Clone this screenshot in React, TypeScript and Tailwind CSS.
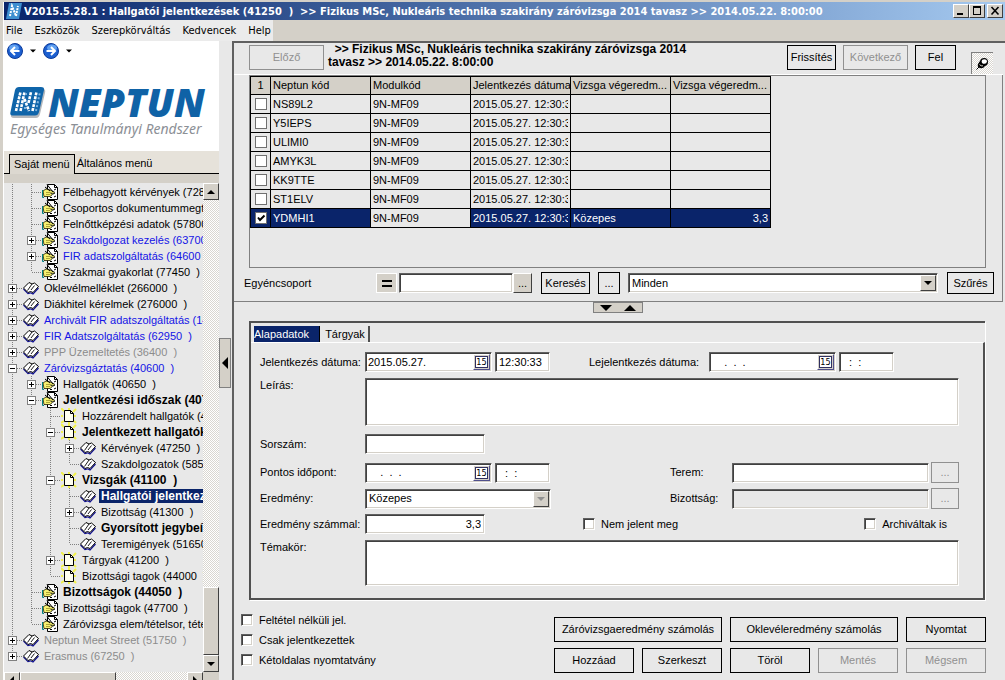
import { useState, type InputHTMLAttributes, type ReactNode } from 'react'
import clsx from 'clsx'

type IconKind = 'book' | 'hand' | 'doc'

interface TreeItem {
  level: number
  label: string
  icon: IconKind
  exp?: '+' | '-'
  tone?: 'blue' | 'gray'
  bold?: boolean
  selected?: boolean
}

const TREE: TreeItem[] = [
  { level: 1, label: 'Félbehagyott kérvények (72850  )', icon: 'hand' },
  { level: 1, label: 'Csoportos dokumentummegtekintés', icon: 'hand' },
  { level: 1, label: 'Felnőttképzési adatok (57800  )', icon: 'hand' },
  { level: 1, label: 'Szakdolgozat kezelés (63700  )', icon: 'hand', exp: '+', tone: 'blue' },
  { level: 1, label: 'FIR adatszolgáltatás (64600  )', icon: 'hand', exp: '+', tone: 'blue' },
  { level: 1, label: 'Szakmai gyakorlat (77450  )', icon: 'hand' },
  { level: 0, label: 'Oklevélmelléklet (266000  )', icon: 'book', exp: '+' },
  { level: 0, label: 'Diákhitel kérelmek (276000  )', icon: 'book', exp: '+' },
  { level: 0, label: 'Archivált FIR adatszolgáltatás (144000  )', icon: 'book', exp: '+', tone: 'blue' },
  { level: 0, label: 'FIR Adatszolgáltatás (62950  )', icon: 'book', exp: '+', tone: 'blue' },
  { level: 0, label: 'PPP Üzemeltetés (36400  )', icon: 'book', exp: '+', tone: 'gray' },
  { level: 0, label: 'Záróvizsgáztatás (40600  )', icon: 'book', exp: '-', tone: 'blue' },
  { level: 1, label: 'Hallgatók (40650  )', icon: 'hand', exp: '+' },
  { level: 1, label: 'Jelentkezési időszak (40700  )', icon: 'hand', exp: '-', bold: true },
  { level: 2, label: 'Hozzárendelt hallgatók (40750  )', icon: 'doc' },
  { level: 2, label: 'Jelentkezett hallgatók (40800  )', icon: 'doc', exp: '-', bold: true },
  { level: 3, label: 'Kérvények (47250  )', icon: 'book', exp: '+' },
  { level: 3, label: 'Szakdolgozatok (58500  )', icon: 'book' },
  { level: 2, label: 'Vizsgák (41100  )', icon: 'doc', exp: '-', bold: true },
  { level: 3, label: 'Hallgatói jelentkezések (41250  )', icon: 'book', bold: true, selected: true },
  { level: 3, label: 'Bizottság (41300  )', icon: 'book', exp: '+' },
  { level: 3, label: 'Gyorsított jegybeírás (41350  )', icon: 'book', bold: true },
  { level: 3, label: 'Teremigények (51650  )', icon: 'book' },
  { level: 2, label: 'Tárgyak (41200  )', icon: 'doc', exp: '+' },
  { level: 2, label: 'Bizottsági tagok (44000  )', icon: 'doc' },
  { level: 1, label: 'Bizottságok (44050  )', icon: 'hand', bold: true },
  { level: 1, label: 'Bizottsági tagok (47700  )', icon: 'hand' },
  { level: 1, label: 'Záróvizsga elem/tételsor, tételek', icon: 'hand' },
  { level: 0, label: 'Neptun Meet Street (51750  )', icon: 'book', exp: '+', tone: 'gray' },
  { level: 0, label: 'Erasmus (67250  )', icon: 'book', exp: '+', tone: 'gray' },
]

const CODES = ['NS89L2', 'Y5IEPS', 'ULIMI0', 'AMYK3L', 'KK9TTE', 'ST1ELV', 'YDMHI1']
const HEADERS = ['1', 'Neptun kód', 'Modulkód', 'Jelentkezés dátuma', 'Vizsga végeredm...', 'Vizsga végeredm...']

const raised = 'border border-t-white border-l-white border-r-[#404040] border-b-[#404040] bg-[#d4d0c8]'
const sunken = 'border border-t-[#606060] border-l-[#606060] border-r-white border-b-white shadow-[inset_1px_1px_0_#404040,inset_-1px_-1px_0_#d4d0c8]'
const dither = 'bg-[conic-gradient(#ffffff_25%,#d9d6d0_0_50%,#ffffff_0_75%,#d9d6d0_0)] bg-[length:2px_2px]'

// does the branch line at this depth go on below row i?
function continues(i: number, depth: number) {
  for (let k = i + 1; k < TREE.length; k++) {
    if (TREE[k].level < depth) return false
    if (TREE[k].level === depth) return true
  }
  return false
}

function Guide({ up, down, across, exp }: { up: boolean; down: boolean; across?: boolean; exp?: '+' | '-' }) {
  return (
    <svg width="19" height="16" viewBox="0 0 19 16" className="shrink-0" shapeRendering="crispEdges">
      <g stroke="#808080" strokeDasharray="1 1">
        {up && <path d="M8.5 0V8" />}
        {down && <path d="M8.5 8V16" />}
        {across && <path d="M9 8.5H19" />}
      </g>
      {exp && (
        <>
          <rect x="4.5" y="4.5" width="8" height="8" fill="#fff" stroke="#808080" />
          <path d={exp === '+' ? 'M6 8.5H11M8.5 6V11' : 'M6 8.5H11'} stroke="#000" />
        </>
      )}
    </svg>
  )
}

function TreeIcon({ kind }: { kind: IconKind }) {
  return (
    <svg width="16" height="16" viewBox="0 0 16 16" className="shrink-0">
      {kind === 'book' && (
        <>
          <path d="M0.5 9L5 13.5L7.5 12.8L10 14L15.5 8" fill="none" stroke="#101090" strokeWidth="1.2" />
          <path d="M0.5 8L6 2.5L9 4L11.5 3L15.500 6.500L10 12.500L7.500 11.500L5 12.500Z" fill="#fff" stroke="#000" />
          <path d="M9 4L4.500 10.500M11.500 5.500L8 10" stroke="#000" strokeWidth="0.9" />
        </>
      )}
      {kind === 'hand' && (
        <>
          <path d="M5.5 0.5H12.5L15.5 3.5V15.5H5.5Z" fill="#fff" stroke="#000" />
          <path d="M12.5 0.5V3.5H15.5" fill="none" stroke="#000" />
          <path d="M12 6L14 5M11 10L13 9M8 13.5H10M12 13L14 12" stroke="#000" />
          <path d="M1 7L4 5L7 5.500L12.500 8L11.500 9.500L8.500 9L10.500 10.500L8 12.500L2 12.500Z" fill="#f6f070" stroke="#1a1a00" strokeWidth="0.8" />
          <path d="M4 8.500H8M4 10.500H8" stroke="#8a8420" strokeWidth="0.7" />
          <path d="M5 0.500L11 8M3 3L8 7" stroke="#000" />
          <path d="M0.5 6V13.5H2" stroke="#008080" fill="none" />
        </>
      )}
      {kind === 'doc' && (
        <>
          <path d="M0 0L3 3M8 0V2M15 1L12 4M0 8H2M15 8H13M0 15L3 13M15 15L13 13M8 16V14" stroke="#f2f24a" strokeWidth="2" />
          <path d="M3.5 2.5H9.5L12.5 5.5V13.5H3.5Z" fill="#fffff0" stroke="#000" />
          <path d="M9.5 2.5V5.5H12.5" fill="none" stroke="#000" />
        </>
      )}
    </svg>
  )
}

function Arrow({ dir, className }: { dir: 'up' | 'down' | 'left' | 'right'; className?: string }) {
  const d = {
    up: 'M0 6L4 2L8 6Z',
    down: 'M0 2L4 6L8 2Z',
    left: 'M6 0L2 4L6 8Z',
    right: 'M2 0L6 4L2 8Z',
  }[dir]
  return <svg width="8" height="8" viewBox="0 0 8 8" className={clsx('shrink-0', className)} fill="currentColor"><path d={d} /></svg>
}

function Btn({ children, className, disabled, label }: { children: ReactNode; className?: string; disabled?: boolean; label?: string }) {
  return (
    <button
      type="button"
      disabled={disabled}
      aria-label={label}
      className={clsx(
        'flex shrink-0 items-center justify-center border whitespace-nowrap',
        disabled ? 'border-[#909090] text-[#909090]' : 'border-black text-black',
        className,
      )}
    >
      {children}
    </button>
  )
}

function Check({ flat, className, ...rest }: InputHTMLAttributes<HTMLInputElement> & { flat?: boolean }) {
  return (
    <span className={clsx('grid h-3 w-3 shrink-0', className)}>
      <input
        type="checkbox"
        className={clsx('peer col-start-1 row-start-1 h-3 w-3 appearance-none bg-white', flat ? 'border border-[#707070]' : sunken)}
        {...rest}
      />
      <svg viewBox="0 0 12 12" className="pointer-events-none col-start-1 row-start-1 hidden h-3 w-3 peer-checked:block">
        <path d="M3 5.5L5 8L9.5 3.5" fill="none" stroke="#000" strokeWidth="2" />
      </svg>
    </span>
  )
}

function TextBox({ className, ...rest }: InputHTMLAttributes<HTMLInputElement>) {
  return <input type="text" className={clsx('h-5 min-w-0 bg-white px-[3px] outline-none', sunken, className)} {...rest} />
}

function DateTime({ id, date, time, name }: { id: string; date: string; time: string; name: string }) {
  return (
    <div className="flex gap-[3px]">
      <div className={clsx('flex h-5 w-[127px] bg-white p-px pl-0.5', sunken)}>
        <input id={id} type="text" defaultValue={date} className="min-w-0 flex-1 bg-transparent outline-none" />
        <button type="button" aria-label={`${name} naptár`} className="flex w-[17px] items-center justify-center border border-t-white border-l-white border-r-[#50508c] border-b-[#50508c] bg-[#d4d0c8]">
          <span className="border border-[#303060] bg-white font-['DejaVu_Sans_Condensed',sans-serif] text-[9px] leading-[10px]">15</span>
        </button>
      </div>
      <TextBox aria-label={`${name} idő`} defaultValue={time} className="w-[55px]" />
    </div>
  )
}

function Combo({ id, label, options, disabled, className }: { id: string; label?: string; options: string[]; disabled?: boolean; className?: string }) {
  return (
    <div className={clsx('flex h-5 bg-white p-px', sunken, className)}>
      <div className="relative flex flex-1">
        <select id={id} aria-label={label} className="w-full appearance-none bg-transparent pl-0.5 outline-none">
          {options.map((o) => <option key={o}>{o}</option>)}
        </select>
        <span className={clsx('pointer-events-none absolute inset-y-0 right-0 flex w-4 items-center justify-center', raised)}>
          <Arrow dir="down" className={disabled ? 'text-[#909090]' : undefined} />
        </span>
      </div>
    </div>
  )
}

function TitleBar() {
  return (
    <header className="flex h-[18px] shrink-0 items-center gap-0.5 bg-linear-to-r from-[#0a246a] to-[#a6caf0] px-0.5">
      <svg width="16" height="16" viewBox="0 0 16 16">
        <path d="M3 0H16L13 16H0Z" fill="#3d8fd0" />
        <path d="M4 13L6 3L10 13L12 3" fill="none" stroke="#fff" strokeWidth="2" strokeDasharray="2 1" />
      </svg>
      <h1 className="min-w-0 flex-1 overflow-hidden font-['DejaVu_Sans_Condensed',sans-serif] text-[11px] font-bold whitespace-pre text-white">
        {'V2015.5.28.1 : Hallgatói jelentkezések (41250  )  >> Fizikus MSc, Nukleáris technika szakirány záróvizsga 2014 tavasz >> 2014.05.22. 8:00:00'}
      </h1>
      <div className="flex">
        <button type="button" aria-label="Kis méret" className={clsx('h-3.5 w-4', raised)}>
          <svg viewBox="0 0 14 12"><path d="M3 9H9" stroke="#000" strokeWidth="2" /></svg>
        </button>
        <button type="button" aria-label="Teljes méret" className={clsx('h-3.5 w-4', raised)}>
          <svg viewBox="0 0 14 12"><path d="M3 2.5H11M3.5 2V10M10.5 2V10M3 9.5H11M3 1.5H11" stroke="#000" /></svg>
        </button>
        <button type="button" aria-label="Bezárás" className={clsx('ml-0.5 h-3.5 w-4', raised)}>
          <svg viewBox="0 0 14 12"><path d="M3.5 2L10.5 9.5M10.5 2L3.5 9.5" stroke="#000" strokeWidth="1.6" /></svg>
        </button>
      </div>
    </header>
  )
}

function NavButton({ flip, label }: { flip?: boolean; label: string }) {
  return (
    <button type="button" aria-label={label} className="flex items-center">
      <svg width="16" height="16" viewBox="0 0 16 16" className={clsx(flip && '-scale-x-100')}>
        <circle cx="8" cy="8" r="7.5" fill="#1c5fd0" stroke="#0b3a9a" />
        <ellipse cx="7" cy="5" rx="5" ry="3.5" fill="#5fa0f0" />
        <path d="M12.5 8H4.5M8 4L4 8L8 12" fill="none" stroke="#fff" strokeWidth="2" />
      </svg>
    </button>
  )
}

function Logo() {
  return (
    <div className="mt-[26px] pl-1.5">
      <div className="flex items-center gap-0.5">
        <svg width="36" height="33" viewBox="0 0 36 33" className="shrink-0">
          <path d="M8 3H33Q36 3 35 7L30 28Q29 32 26 32H4Q0 32 1 28Z" fill="#b4b8bc" />
          <path d="M9 1H31Q34.500 1 34 4L29 26Q28 29.500 25 29.500H3Q-0.500 29.500 0.500 26L5 4Q6 1 9 1Z" fill="#0f65aa" />
          <g fill="none" stroke="#fff" strokeWidth="2.600" strokeDasharray="3 1">
            <path d="M6 25L10.500 6M10.500 25L14.500 6M14.500 13L19 25" />
            <path d="M18.500 17L21 6M22.500 25L26.500 6" />
          </g>
          <path d="M15 8H19M14 22H17M26 25L30 6" fill="none" stroke="#7fb2dc" strokeWidth="2" strokeDasharray="2 2" />
        </svg>
        <span className="font-['Open_Sans',sans-serif] text-[39px] leading-[34px] font-extrabold text-[#0f62a6] italic">NEPTUN</span>
      </div>
      <p className="font-['Noto_Sans',sans-serif] text-sm leading-5 whitespace-nowrap text-[#8c9096] italic">Egységes Tanulmányi Rendszer</p>
    </div>
  )
}

function Sidebar() {
  return (
    <aside className="flex w-[215px] shrink-0 flex-col">
      <div className="h-[110px] shrink-0 overflow-hidden bg-white">
        <div className="flex items-center gap-[7px] pt-0.5 pl-[3px]">
          <NavButton label="Vissza" />
          <Arrow dir="down" className="w-[6px]" />
          <NavButton label="Előre" flip />
          <Arrow dir="down" className="w-[6px]" />
        </div>
        <Logo />
      </div>
      <div className="flex shrink-0 items-end bg-[#e6e2da] pt-[3px]" role="tablist">
        <span className="w-[5px] border-b border-black" />
        <button type="button" role="tab" aria-selected="true" className="h-5 border-x border-t border-black bg-[#dcd8d0] px-1">Saját menü</button>
        <button type="button" role="tab" aria-selected="false" className="h-5 flex-1 border-b border-black pl-0.5 text-left">Általános menü</button>
      </div>
      <div className="h-[9px] shrink-0 bg-[#d4d0c8]" />
      <div className="flex min-h-0 flex-1">
        <ul className="min-w-0 flex-1 overflow-hidden bg-[#e8e8e8] pt-px">
          {TREE.map((item, i) => (
            <li key={item.label} className="flex h-4 items-center">
              {Array.from({ length: item.level }, (_, d) => (
                <Guide key={d} up={continues(i, d)} down={continues(i, d)} />
              ))}
              <Guide up down={continues(i, item.level)} across exp={item.exp} />
              <TreeIcon kind={item.icon} />
              <a
                href="#"
                className={clsx(
                  'ml-[3px] px-0.5 whitespace-pre',
                  item.bold && 'text-[12px] leading-[14px] font-bold',
                  item.selected ? 'bg-[#0a246a] text-white'
                  : item.tone === 'blue' ? 'text-[#1414e6]'
                  : item.tone === 'gray' ? 'text-[#8c8c8c]'
                  : 'text-black',
                )}
              >
                {item.label}
              </a>
            </li>
          ))}
        </ul>
        <div className={clsx('flex w-4 shrink-0 flex-col', dither)}>
          <button type="button" aria-label="Fel görget" className={clsx('flex h-[17px] items-center justify-center', raised)}><Arrow dir="up" /></button>
          <div className="flex-1" />
          <div className={clsx('h-[68px]', raised)} />
          <button type="button" aria-label="Le görget" className={clsx('flex h-[17px] items-center justify-center', raised)}><Arrow dir="down" /></button>
        </div>
      </div>
      {/* horizontal scroll bar, runs under the window edge */}
      <div className="flex h-2 shrink-0 overflow-hidden bg-[#d4d0c8]">
        <div className={clsx('flex min-w-0 flex-1', dither)}>
          <button type="button" aria-label="Balra görget" className={clsx('flex h-4 w-4 items-center justify-center', raised)}><Arrow dir="left" /></button>
          <div className={clsx('h-4 w-24', raised)} />
          <button type="button" aria-label="Jobbra görget" className={clsx('ml-auto flex h-4 w-4 items-center justify-center', raised)}><Arrow dir="right" /></button>
        </div>
        <div className="w-4" />
      </div>
    </aside>
  )
}

function StudentTable() {
  return (
    <table className="w-[521px] table-fixed border-collapse">
      <colgroup>
        <col className="w-5" />
        {HEADERS.slice(1).map((_, i) => <col key={i} className="w-[100px]" />)}
      </colgroup>
      <thead>
        <tr className="h-[18px] bg-[#d4d0c8]">
          {HEADERS.map((h, i) => (
            <th key={i} className={clsx('border border-black p-0 font-normal whitespace-nowrap', i === 0 ? 'text-center' : 'pl-0.5 text-left')}>{h}</th>
          ))}
        </tr>
      </thead>
      <tbody>
        {CODES.map((code) => {
          const active = code === 'YDMHI1'
          return (
            <tr key={code} className={clsx('h-[19px]', active && 'bg-[#0a246a] text-white')}>
              <td className="border border-black p-0"><Check flat defaultChecked={active} aria-label={code} className="mx-auto" /></td>
              <td className="border border-black px-0.5 py-0">{code}</td>
              <td className="border border-black bg-[#e8e8e8] px-0.5 py-0 text-black">9N-MF09</td>
              <td className="border border-black px-0.5 py-0 whitespace-nowrap">
                <div className="overflow-hidden">2015.05.27. 12:30:33</div>
              </td>
              <td className="border border-black px-0.5 py-0">{active && 'Közepes'}</td>
              <td className="border border-black px-0.5 py-0 text-right">{active && '3,3'}</td>
            </tr>
          )
        })}
      </tbody>
    </table>
  )
}

function ListPanel() {
  return (
    <section className="border-r border-b border-[#808080]">
      <div className="mr-4 ml-[15px] h-[193px] border border-[#808080]">
        <StudentTable />
      </div>
      <div className="flex items-center pt-1 pr-2 pb-[7px] pl-2.5">
        <label htmlFor="group" className="w-[132px]">Egyéncsoport</label>
        <button type="button" aria-label="Egyenlő" className="mr-0.5 flex h-5 w-[21px] items-center justify-center border border-white bg-[#d4d0c8]">
          <svg width="10" height="7" viewBox="0 0 10 7"><path d="M0 1H10M0 6H10" stroke="#000" strokeWidth="2" /></svg>
        </button>
        <TextBox id="group" className="w-[114px]" />
        <button type="button" aria-label="Csoport választás" className={clsx('h-5 w-[19px]', raised)}>...</button>
        <Btn className="ml-[9px] h-[22px] w-[49px]">Keresés</Btn>
        <Btn className="ml-2 h-[22px] w-[22px]" label="További keresés">...</Btn>
        <Combo id="filter" label="Szűrő" options={['Minden']} className="mr-[9px] ml-2 flex-1" />
        <Btn className="h-[22px] w-[47px]">Szűrés</Btn>
      </div>
    </section>
  )
}

function FieldRow({ id, label, children, className, top }: { id: string; label: string; children: ReactNode; className?: string; top?: boolean }) {
  return (
    <div className={clsx('flex', top ? 'items-start' : 'items-center', className)}>
      <label htmlFor={id} className={clsx('w-[105px] shrink-0', top && 'pt-px')}>{label}</label>
      {children}
    </div>
  )
}

function FormPanel() {
  const [tab, setTab] = useState('Alapadatok')
  return (
    <section className="mr-5 ml-[15px] border-t-2 border-l-2 border-[#505050] shadow-[1px_1px_0_#fff]">
      <div className="flex h-[19px] items-end gap-0.5 pt-[3px] pl-[3px]" role="tablist">
        {['Alapadatok', 'Tárgyak'].map((t) => (
          <button
            key={t}
            type="button"
            role="tab"
            aria-selected={tab === t}
            onClick={() => setTab(t)}
            className={clsx('h-4', tab === t ? 'w-[66px] border-r border-black bg-[#0a246a] text-left text-white' : 'w-12 border-r-2 border-[#505050]')}
          >
            {t}
          </button>
        ))}
      </div>
      <div className="border-t border-r-2 border-b-2 border-t-white border-r-[#505050] border-b-[#505050] pt-[9px] pr-6 pb-3 pl-[9px]">
        <FieldRow id="signup" label="Jelentkezés dátuma:">
          <DateTime id="signup" name="Jelentkezés" date="2015.05.27." time="12:30:33" />
          <label htmlFor="signoff" className="ml-[39px] w-[120px] whitespace-nowrap">Lejelentkezés dátuma:</label>
          <DateTime id="signoff" name="Lejelentkezés" date="    .  .  ." time="  :  :" />
        </FieldRow>
        <FieldRow id="desc" label="Leírás:" top className="mt-1.5">
          <textarea id="desc" className={clsx('h-12 flex-1 resize-none bg-white outline-none', sunken)} />
        </FieldRow>
        <FieldRow id="serial" label="Sorszám:" className="mt-2">
          <TextBox id="serial" className="w-[120px]" />
        </FieldRow>
        <div className="mt-2 flex items-center justify-between">
          <FieldRow id="when" label="Pontos időpont:">
            <DateTime id="when" name="Pontos időpont" date="    .  .  ." time="  :  :" />
          </FieldRow>
          <div className="flex items-center">
            <label htmlFor="room" className="w-[62px]">Terem:</label>
            <TextBox id="room" className="w-[197px]" />
            <Btn disabled label="Terem választás" className="ml-0.5 h-[21px] w-7">...</Btn>
          </div>
        </div>
        <div className="mt-[5px] flex items-center justify-between">
          <FieldRow id="result" label="Eredmény:">
            <Combo id="result" options={['Közepes']} disabled className="w-[186px]" />
          </FieldRow>
          <div className="flex items-center">
            <label htmlFor="board" className="w-[62px]">Bizottság:</label>
            <TextBox id="board" readOnly className="w-[197px] bg-[#e8e8e8]!" />
            <Btn disabled label="Bizottság választás" className="ml-0.5 h-[21px] w-7">...</Btn>
          </div>
        </div>
        <div className="mt-[5px] flex items-center">
          <FieldRow id="score" label="Eredmény számmal:">
            <TextBox id="score" defaultValue="3,3" className="w-[120px] text-right" />
          </FieldRow>
          <label className="ml-[98px] flex items-center gap-1.5"><Check />Nem jelent meg</label>
          <label className="mr-3 ml-auto flex items-center gap-1.5"><Check />Archiváltak is</label>
        </div>
        <FieldRow id="topic" label="Témakör:" top className="mt-1.5">
          <textarea id="topic" className={clsx('h-[46px] flex-1 resize-none bg-white outline-none', sunken)} />
        </FieldRow>
      </div>
    </section>
  )
}

function Footer() {
  return (
    <footer className="flex items-start justify-between pt-3.5 pr-[19px] pl-[7px]">
      <div className="flex flex-col">
        {['Feltétel nélküli jel.', 'Csak jelentkezettek', 'Kétoldalas nyomtatvány'].map((t) => (
          <label key={t} className="flex h-5 items-start gap-1.5"><Check />{t}</label>
        ))}
      </div>
      <div className="grid grid-cols-5 gap-x-2 gap-y-1.5 pt-[3px]">
        <Btn className="col-span-2 h-[25px]">Záróvizsgaeredmény számolás</Btn>
        <Btn className="col-span-2 h-[25px]">Oklevéleredmény számolás</Btn>
        <Btn className="h-[25px] w-20">Nyomtat</Btn>
        <Btn className="h-[25px] w-20">Hozzáad</Btn>
        <Btn className="h-[25px] w-20">Szerkeszt</Btn>
        <Btn className="h-[25px] w-20">Töröl</Btn>
        <Btn disabled className="h-[25px] w-20">Mentés</Btn>
        <Btn disabled className="h-[25px] w-20">Mégsem</Btn>
      </div>
    </footer>
  )
}

export default function App() {
  return (
    <div className="flex h-screen flex-col overflow-hidden bg-[#d4d0c8] pt-0.5 font-['Liberation_Sans',Arial,sans-serif] text-[11px] leading-[13px] text-black">
      <div className="ml-[3px] flex min-h-0 flex-1 flex-col border-l border-white">
        <TitleBar />
        <nav className="flex h-[21px] w-[269px] shrink-0 items-center gap-3 bg-[#ebebeb] pl-0.5 font-['DejaVu_Sans_Condensed',sans-serif]">
          {['File', 'Eszközök', 'Szerepkörváltás', 'Kedvencek', 'Help'].map((m) => <a key={m} href="#">{m}</a>)}
        </nav>
        <div className="flex min-h-0 flex-1">
          <Sidebar />
          <div className="flex w-[13px] shrink-0 items-center bg-[#e8e8e8] pt-1">
            <button type="button" aria-label="Menü elrejtése" className="flex h-[50px] w-3 items-center justify-center border border-[#808080] bg-[#d4d0c8]">
              <Arrow dir="left" className="h-3 w-3" />
            </button>
          </div>
          <main className="flex min-w-0 flex-1 flex-col border-t-2 border-l-2 border-[#606060] bg-[#e8e8e8]">
            <div className="mr-0.5 flex h-8 shrink-0 items-start border-b border-white pr-2.5 pl-[15px]">
              <Btn disabled className="mt-0.5 h-[25px] w-[75px]">Előző</Btn>
              <h2 className="ml-1 flex-1 text-[12px] font-bold whitespace-pre">{'  >> Fizikus MSc, Nukleáris technika szakirány záróvizsga 2014\ntavasz >> 2014.05.22. 8:00:00'}</h2>
              <div className="mt-0.5 flex gap-[7px]">
                <Btn className="h-[25px] w-[49px]">Frissítés</Btn>
                <Btn disabled className="h-[25px] w-[65px]">Következő</Btn>
                <Btn className="h-[25px] w-[41px]">Fel</Btn>
              </div>
              <button type="button" aria-label="Rögzítés" className={clsx('mt-[9px] ml-[15px] flex h-[22px] w-[22px] items-center justify-center border-t border-l border-[#808080]', dither)}>
                <svg width="13" height="13" viewBox="0 0 13 13">
                  <path d="M4 4Q5 1 8 1Q12 1 12 5Q12 8 9 9Q7 12 4 11Q1 10 2 7Z" fill="#000" />
                  <ellipse cx="8.300" cy="4.500" rx="2.600" ry="2.300" fill="#fff" />
                  <path d="M3.500 7.500Q5 9.500 7 8.800" stroke="#d4d0c8" fill="none" />
                  <path d="M3 10L0.500 12.500" stroke="#000" />
                </svg>
              </button>
            </div>
            <div className="mr-0.5 shrink-0"><ListPanel /></div>
            <div className="mb-2 ml-[359px] flex h-[11px] w-[50px] shrink-0 items-center justify-around border border-[#808080] bg-[#d4d0c8]">
              <button type="button" aria-label="Lejjebb"><Arrow dir="down" className="h-3 w-3" /></button>
              <button type="button" aria-label="Feljebb"><Arrow dir="up" className="h-3 w-3" /></button>
            </div>
            <FormPanel />
            <Footer />
          </main>
        </div>
      </div>
    </div>
  )
}
